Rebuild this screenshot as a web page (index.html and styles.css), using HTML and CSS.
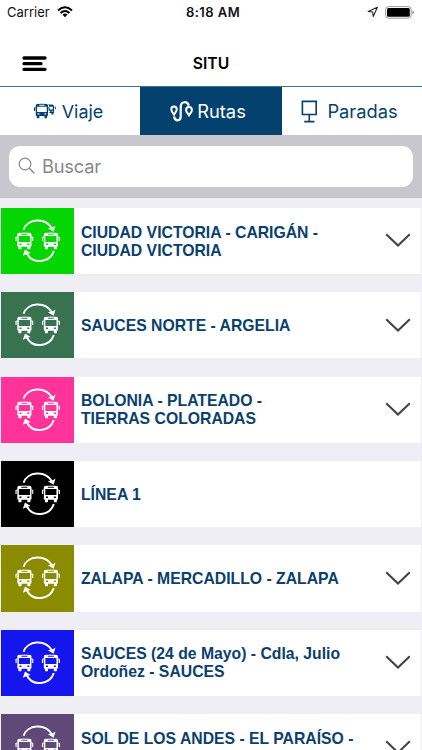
FILE: index.html
```html
<!DOCTYPE html>
<html lang="es">
<head>
<meta charset="utf-8">
<title>SITU</title>
<link rel="stylesheet" href="styles.css">
</head>
<body>
<svg class="defs" width="0" height="0">
  <symbol id="bus" viewBox="0 0 18 17">
    <path fill="currentColor" fill-rule="evenodd" d="M3.6 .3Q9-.4 14.4 .3Q15.9.5 16 2V13.3Q16 14.2 14.9 14.2V16.2Q14.9 16.9 14.2 16.9H12.6Q11.9 16.9 11.9 16.2V14.2H6.1V16.2Q6.1 16.9 5.4 16.9H3.8Q3.1 16.9 3.1 16.2V14.2Q2 14.2 2 13.3V2Q2.1.5 3.6 .3ZM6 1.4V2.3H12V1.4ZM3.5 3.6V9.5H14.5V3.6ZM4.1 11V12.5H6.1V11ZM11.9 11V12.5H13.9V11ZM0 4.8H1.3V8.5H0ZM16.7 4.8H18V8.5H16.7Z"/>
    <path d="M2.5 4.6H.6V6M15.5 4.6H17.4V6" fill="none" stroke="currentColor" stroke-width=".8"/>
  </symbol>
  <symbol id="loop" viewBox="0 0 73 66">
    <use href="#bus" x="14.3" y="24.4" width="18.2" height="17.2"/>
    <use href="#bus" x="40.8" y="24.4" width="18.2" height="17.2"/>
    <path d="M22.6 21.8C26 10.6 44.5 8.8 51 20.6M52.8 43C49 54.8 31.5 57 25.8 45.2" fill="none" stroke="currentColor" stroke-width="2"/>
    <path d="M46.8 20.2 52.6 23.7 54.5 17.5 51.8 19.3ZM21.8 47.8 24 41.6 29.6 44.9 26.6 45.7Z" fill="currentColor"/>
  </symbol>
  <symbol id="chevron" viewBox="0 0 26 15"><path d="M1.2 1.3 13 12.6 24.8 1.3" fill="none" stroke="currentColor" stroke-width="2.1"/></symbol>
</svg>
<div class="screen">
  <header>
    <div class="status">
      <div class="carrier"><span>Carrier</span>
        <svg width="16" height="12" viewBox="0 0 16 12"><g fill="none" stroke="#000" stroke-width="2"><path d="M1 4.4Q8-1.9 15 4.4M3.5 7Q8 2.9 12.5 7"/></g><path d="M5.4 8.6Q8 6.3 10.6 8.6L8 11.3Z"/></svg>
      </div>
      <div class="clock">8:18 AM</div>
      <div class="indicators">
        <svg width="12" height="12" viewBox="0 0 12 12"><path d="M10.4 1.2 1.2 5.5 5.7 6 6.2 10.4Z" fill="none" stroke="#222" stroke-width="1.1" stroke-linejoin="round"/></svg>
        <svg width="30" height="13" viewBox="0 0 30 13"><rect x=".6" y=".6" width="25.6" height="11.6" rx="3" fill="none" stroke="#999" stroke-width="1"/><rect x="2" y="2" width="22.8" height="8.8" rx="1.5"/><path d="M27.3 4.4Q29 5 29 6.4T27.3 8.4Z" fill="#999"/></svg>
      </div>
    </div>
    <div class="navbar">
      <svg class="menu" width="25" height="16" viewBox="0 0 25 16"><path d="M2 2H23M2 7.7H19M2 13.3H23" stroke="#000" stroke-width="3.3" stroke-linecap="round"/></svg>
      <h1>SITU</h1>
    </div>
  </header>
  <nav class="tabs">
    <div class="tab trip">
      <svg width="22" height="16" viewBox="0 0 22 16"><use href="#bus" x="0" y=".6" width="15.8" height="15"/><path fill="currentColor" fill-rule="evenodd" d="M14 1.5H18Q19.8 1.5 20 3V10H19.4V11.6H17.4V10.1H15.4V9H16.1V7.6H15.4V6.6H18.8V3.8H15.2Q15.1 2.3 14 1.5ZM17.5 7.7V8.7H18.8V7.7ZM20.3 3.8H21.8V6.2H21V4.6H20.3Z"/></svg>
      <span>Viaje</span>
    </div>
    <div class="tab active">
      <svg width="23" height="23" viewBox="0 0 23 23" fill="none" stroke="currentColor"><path stroke-width="2.2" d="M4 16.5C5 21.8 10.7 21.3 10.7 16.5V7C10.7 1 17.8 .7 18.7 5.8"/><path stroke-width="2" d="M4 14.7C2.5 12.3 1.3 11.4 1.3 9.3A2.7 2.7 0 0 1 6.7 9.3C6.7 11.4 5.5 12.3 4 14.7ZM19 15.3C17.5 12.9 16.1 12 16.1 9.9A2.9 2.9 0 0 1 21.9 9.9C21.9 12 20.5 12.9 19 15.3Z"/></svg>
      <span>Rutas</span>
    </div>
    <div class="tab stops">
      <svg width="17" height="23" viewBox="0 0 17 23" fill="none" stroke="currentColor" stroke-width="1.6"><path d="M1.4 1.4H15.2V14.5H1.4ZM8.3 14.5V21.3M3.2 21.6H13.4"/></svg>
      <span>Paradas</span>
    </div>
  </nav>
  <div class="search">
    <div class="field">
      <svg width="18" height="18" viewBox="0 0 18 18" fill="none" stroke="currentColor" stroke-width="1.2"><circle cx="7" cy="7" r="5.8"/><path d="M11.3 11.3 16.3 16.3" stroke-width="1.5"/></svg>
      <span>Buscar</span>
    </div>
  </div>
  <main class="routes">
    <div class="route"><div class="tile green"><svg><use href="#loop"/></svg></div><p>CIUDAD VICTORIA - CARIGÁN -<br>CIUDAD VICTORIA</p><svg class="chevron"><use href="#chevron"/></svg></div>
    <div class="route"><div class="tile forest"><svg><use href="#loop"/></svg></div><p>SAUCES NORTE - ARGELIA</p><svg class="chevron"><use href="#chevron"/></svg></div>
    <div class="route"><div class="tile pink"><svg><use href="#loop"/></svg></div><p>BOLONIA - PLATEADO -<br>TIERRAS COLORADAS</p><svg class="chevron"><use href="#chevron"/></svg></div>
    <div class="route"><div class="tile black"><svg><use href="#loop"/></svg></div><p>LÍNEA 1</p></div>
    <div class="route"><div class="tile olive"><svg><use href="#loop"/></svg></div><p>ZALAPA - MERCADILLO - ZALAPA</p><svg class="chevron"><use href="#chevron"/></svg></div>
    <div class="route"><div class="tile blue"><svg><use href="#loop"/></svg></div><p>SAUCES (24 de Mayo) - Cdla, Julio<br>Ordoñez - SAUCES</p><svg class="chevron"><use href="#chevron"/></svg></div>
    <div class="route"><div class="tile purple"><svg><use href="#loop"/></svg></div><p>SOL DE LOS ANDES - EL PARAÍSO -<br>&nbsp;</p><svg class="chevron"><use href="#chevron"/></svg></div>
  </main>
</div>
</body>
</html>
```
FILE: styles.css
```css
* { box-sizing: border-box; }
body { margin: 0; overflow: hidden; }
svg { display: block; flex: none; }
.defs { position: absolute; }
.screen {
  width: 422px;
  height: 750px;
  overflow: hidden;
  background: #efeef4;
  font-family: Inter, sans-serif;
}
header { height: 87px; background: #fff; border-bottom: 1px solid #3b719e; }
.status {
  display: grid;
  grid-template-columns: 1fr 80px 1fr;
  align-items: center;
  height: 24px;
  padding: 0 7px;
  font-size: 13px;
  color: #111;
}
.carrier { display: flex; align-items: center; gap: 7px; }
.clock { padding-left: 4px; text-align: center; font-weight: 600; letter-spacing: .45px; white-space: nowrap; }
.indicators { display: flex; justify-content: flex-end; align-items: center; gap: 6px; }
.navbar {
  display: grid;
  grid-template-columns: 1fr auto 1fr;
  align-items: center;
  height: 62px;
  padding: 18px 22px 0;
}
h1 { margin: 0; font-size: 15.7px; line-height: 20px; font-weight: 600; color: #000; }
.tabs { display: grid; grid-template-columns: 140px 142px 140px; height: 48px; }
.tab {
  display: flex;
  align-items: center;
  justify-content: center;
  gap: 5px;
  background: #fff;
  color: #04416f;
  font-size: 18.3px;
}
.trip { gap: 6px; padding-right: 3px; font-size: 17.9px; }
.stops { gap: 9px; padding-right: 5px; }
.active { gap: 4px; padding-right: 6px; background: #04416f; color: #fff; }
.search { height: 62.8px; padding: 11px 9px; background: #c8c7ce; border-bottom: 1px solid #bebdc5; }
.field {
  display: flex;
  align-items: center;
  gap: 6px;
  width: 404px;
  height: 41px;
  padding: 0 0 2px 9px;
  border-radius: 11px;
  background: #fff;
  color: #87878c;
  font-size: 18.3px;
  letter-spacing: -.2px;
}
.routes { display: flex; flex-direction: column; gap: 18.1px; padding: 10px 1px 0; }
.route {
  display: flex;
  align-items: center;
  flex: none;
  height: 66.3px;
  background: #fff;
}
.tile { flex: none; width: 73px; height: 66.3px; color: #fff; }
.tile svg { width: 73px; height: 66px; }
.route p {
  flex: 1;
  margin: 0 0 0 7px;
  padding-top: 1.2px;
  color: #0b406e;
  font: bold 15.75px/18px "Liberation Sans", sans-serif;
  white-space: nowrap;
}
.chevron { width: 26px; height: 15px; margin-right: 10px; color: #444; }
.green { background: #04d602; }
.forest { background: #397250; }
.pink { background: #ff3399; }
.black { background: #000; }
.olive { background: #8b8b00; }
.blue { background: #1515ee; }
.purple { background: #604979; }
```
